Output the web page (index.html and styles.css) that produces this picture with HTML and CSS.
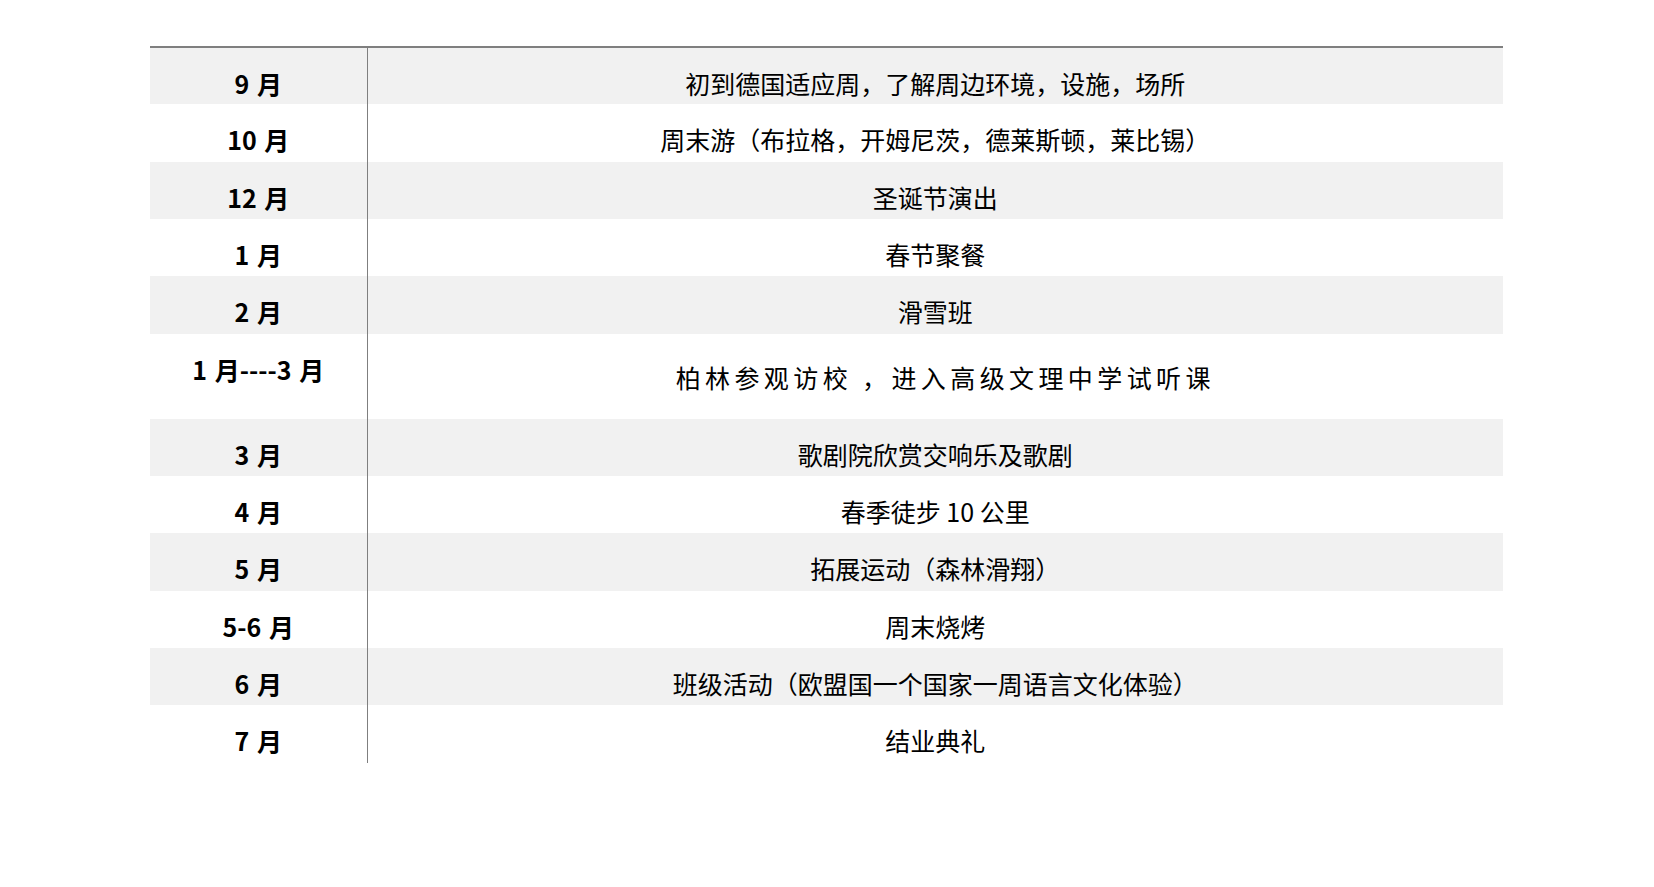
FILE: index.html
```html
<!DOCTYPE html>
<html lang="zh-CN">
<head>
<meta charset="utf-8">
<title>活动安排</title>
<link rel="stylesheet" href="styles.css">
</head>
<body>
<table class="schedule">
  <colgroup><col class="col-month"><col class="col-desc"></colgroup>
  <tbody>
    <tr><td class="month">9 月</td><td class="desc">初到德国适应周，了解周边环境，设施，场所</td></tr>
    <tr><td class="month">10 月</td><td class="desc">周末游（布拉格，开姆尼茨，德莱斯顿，莱比锡）</td></tr>
    <tr><td class="month">12 月</td><td class="desc">圣诞节演出</td></tr>
    <tr><td class="month">1 月</td><td class="desc">春节聚餐</td></tr>
    <tr><td class="month">2 月</td><td class="desc">滑雪班</td></tr>
    <tr class="tall"><td class="month">1 月----3 月</td><td class="desc spaced">柏林参观访校 ，进入高级文理中学试听课</td></tr>
    <tr><td class="month">3 月</td><td class="desc">歌剧院欣赏交响乐及歌剧</td></tr>
    <tr><td class="month">4 月</td><td class="desc">春季徒步 10 公里</td></tr>
    <tr><td class="month">5 月</td><td class="desc">拓展运动（森林滑翔）</td></tr>
    <tr><td class="month">5-6 月</td><td class="desc">周末烧烤</td></tr>
    <tr><td class="month">6 月</td><td class="desc">班级活动（欧盟国一个国家一周语言文化体验）</td></tr>
    <tr><td class="month">7 月</td><td class="desc">结业典礼</td></tr>
  </tbody>
</table>
</body>
</html>
```
FILE: styles.css
```css
html, body {
  margin: 0;
  padding: 0;
  background: #ffffff;
}

body {
  font-family: "Noto Sans CJK SC", "Noto Sans", sans-serif;
  color: #000000;
}

.schedule {
  margin: 46px 0 0 150px;
  width: 1353px;
  border-collapse: collapse;
  table-layout: fixed;
  border-top: 2px solid #7f7f7f;
}

.col-month {
  width: 217px;
}

.schedule tr {
  height: 57.33px;
}

.schedule tr:nth-child(odd) {
  background: #f1f1f1;
}

.schedule tr.tall {
  height: 85px;
}

.schedule td {
  padding: 21px 0 0 0;
  vertical-align: top;
  text-align: center;
  font-size: 25px;
  line-height: 28px;
  white-space: nowrap;
}

.month {
  font-weight: 700;
  border-right: 1px solid #7f7f7f;
  word-spacing: 2px;
}

.desc {
  font-weight: 400;
}

.schedule .tall .spaced {
  padding-top: 29px;
  padding-left: 20px;
  letter-spacing: 4.4px;
}
```
